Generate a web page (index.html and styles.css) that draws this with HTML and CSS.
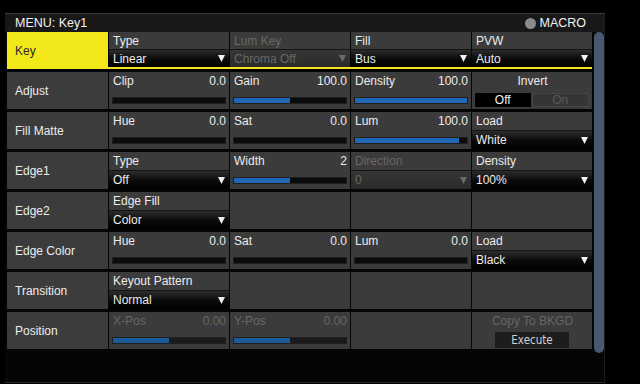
FILE: index.html
```html
<!DOCTYPE html>
<html>
<head>
<meta charset="utf-8">
<link rel="stylesheet" href="styles.css">
</head>
<body>
<div class="panel">
  <div class="header">
    <span class="title">MENU: Key1</span>
    <span class="macro"><span class="dot"></span>MACRO</span>
  </div>
  <div class="body">
    <div class="rows">
      <div class="row key">
        <div class="label sel">Key</div>
        <div class="cells">
          <div class="cell"><div class="cap"><span>Type</span></div><div class="dd"><span>Linear</span><svg class="tri" viewBox="0 0 7 7"><polygon points="0,0 7,0 3.5,7"/></svg></div></div>
          <div class="cell off"><div class="cap"><span>Lum Key</span></div><div class="dd"><span>Chroma Off</span><svg class="tri" viewBox="0 0 7 7"><polygon points="0,0 7,0 3.5,7"/></svg></div></div>
          <div class="cell"><div class="cap"><span>Fill</span></div><div class="dd"><span>Bus</span><svg class="tri" viewBox="0 0 7 7"><polygon points="0,0 7,0 3.5,7"/></svg></div></div>
          <div class="cell"><div class="cap"><span>PVW</span></div><div class="dd"><span>Auto</span><svg class="tri" viewBox="0 0 7 7"><polygon points="0,0 7,0 3.5,7"/></svg></div></div>
        </div>
      </div>

      <div class="row">
        <div class="label">Adjust</div>
        <div class="cell"><div class="cap"><span>Clip</span><span>0.0</span></div><div class="sl"><div class="fill" style="width:0%"></div></div></div>
        <div class="cell"><div class="cap"><span>Gain</span><span>100.0</span></div><div class="sl"><div class="fill" style="width:50%"></div></div></div>
        <div class="cell"><div class="cap"><span>Density</span><span>100.0</span></div><div class="sl"><div class="fill" style="width:100%"></div></div></div>
        <div class="cell"><div class="cap center"><span>Invert</span></div><div class="toggle"><span class="on">Off</span><span class="idle">On</span></div></div>
      </div>

      <div class="row">
        <div class="label">Fill Matte</div>
        <div class="cell"><div class="cap"><span>Hue</span><span>0.0</span></div><div class="sl"><div class="fill" style="width:0%"></div></div></div>
        <div class="cell"><div class="cap"><span>Sat</span><span>0.0</span></div><div class="sl"><div class="fill" style="width:0%"></div></div></div>
        <div class="cell"><div class="cap"><span>Lum</span><span>100.0</span></div><div class="sl"><div class="fill" style="width:93%"></div></div></div>
        <div class="cell"><div class="cap"><span>Load</span></div><div class="dd"><span>White</span><svg class="tri" viewBox="0 0 7 7"><polygon points="0,0 7,0 3.5,7"/></svg></div></div>
      </div>

      <div class="row">
        <div class="label">Edge1</div>
        <div class="cell"><div class="cap"><span>Type</span></div><div class="dd"><span>Off</span><svg class="tri" viewBox="0 0 7 7"><polygon points="0,0 7,0 3.5,7"/></svg></div></div>
        <div class="cell"><div class="cap"><span>Width</span><span>2</span></div><div class="sl"><div class="fill" style="width:50%"></div></div></div>
        <div class="cell off"><div class="cap"><span>Direction</span></div><div class="dd"><span>0</span><svg class="tri" viewBox="0 0 7 7"><polygon points="0,0 7,0 3.5,7"/></svg></div></div>
        <div class="cell"><div class="cap"><span>Density</span></div><div class="dd"><span>100%</span><svg class="tri" viewBox="0 0 7 7"><polygon points="0,0 7,0 3.5,7"/></svg></div></div>
      </div>

      <div class="row">
        <div class="label">Edge2</div>
        <div class="cell"><div class="cap"><span>Edge Fill</span></div><div class="dd"><span>Color</span><svg class="tri" viewBox="0 0 7 7"><polygon points="0,0 7,0 3.5,7"/></svg></div></div>
        <div class="cell"></div>
        <div class="cell"></div>
        <div class="cell"></div>
      </div>

      <div class="row">
        <div class="label">Edge Color</div>
        <div class="cell"><div class="cap"><span>Hue</span><span>0.0</span></div><div class="sl"><div class="fill" style="width:0%"></div></div></div>
        <div class="cell"><div class="cap"><span>Sat</span><span>0.0</span></div><div class="sl"><div class="fill" style="width:0%"></div></div></div>
        <div class="cell"><div class="cap"><span>Lum</span><span>0.0</span></div><div class="sl"><div class="fill" style="width:0%"></div></div></div>
        <div class="cell"><div class="cap"><span>Load</span></div><div class="dd"><span>Black</span><svg class="tri" viewBox="0 0 7 7"><polygon points="0,0 7,0 3.5,7"/></svg></div></div>
      </div>

      <div class="row">
        <div class="label">Transition</div>
        <div class="cell"><div class="cap"><span>Keyout Pattern</span></div><div class="dd"><span>Normal</span><svg class="tri" viewBox="0 0 7 7"><polygon points="0,0 7,0 3.5,7"/></svg></div></div>
        <div class="cell"></div>
        <div class="cell"></div>
        <div class="cell"></div>
      </div>

      <div class="row">
        <div class="label">Position</div>
        <div class="cell off"><div class="cap"><span>X-Pos</span><span>0.00</span></div><div class="sl"><div class="fill" style="width:50%"></div></div></div>
        <div class="cell off"><div class="cap"><span>Y-Pos</span><span>0.00</span></div><div class="sl"><div class="fill" style="width:50%"></div></div></div>
        <div class="cell"></div>
        <div class="cell off"><div class="cap center"><span>Copy To BKGD</span></div><div class="btn">Execute</div></div>
      </div>
    </div>
    <div class="scroll"></div>
  </div>
</div>
</body>
</html>
```

FILE: styles.css
```css
html, body {
  margin: 0;
  padding: 0;
  background: #000;
}
body {
  font-family: "Liberation Sans", Arial, sans-serif;
  font-size: 12px;
  color: #ececec;
  width: 640px;
  height: 384px;
  overflow: hidden;
}
.panel {
  margin: 13px 0 0 5px;
  width: 599px;
  height: 368px;
  background: #050505;
  border-top: 1px solid #3a3b46;
  border-right: 1px solid #1c1c20;
  border-bottom: 1px solid #262626;
}
.header {
  height: 18px;
  background: #181818;
  display: flex;
  align-items: center;
  justify-content: space-between;
  padding: 0 18px 0 10px;
  font-size: 12.5px;
  color: #f2f2f2;
}
.macro {
  display: flex;
  align-items: center;
  gap: 3px;
}
.dot {
  width: 11px;
  height: 11px;
  border-radius: 50%;
  background: #8a8a8a;
}
.body {
  display: flex;
  padding-left: 2px;
}
.rows {
  display: flex;
  flex-direction: column;
  gap: 3px;
  width: 585px;
}
.row {
  display: grid;
  grid-template-columns: 101px repeat(4, 120px);
  column-gap: 1px;
  height: 37px;
}
.row.key {
  grid-template-columns: 101px 484px;
  column-gap: 0;
}
.cells {
  display: grid;
  grid-template-columns: repeat(4, 120px);
  column-gap: 1px;
  padding-left: 1px;
  border-bottom: 2px solid #f2e618;
}
.cells .cap {
  height: 17px;
}
.cells .dd {
  height: 17px;
}
.label {
  background: #3c3c3c;
  display: flex;
  align-items: center;
  padding-left: 8px;
  color: #ececec;
}
.label.sel {
  background: #f3e81a;
  color: #2a2a2a;
}
.cell {
  background: #3b3b3b;
  display: flex;
  flex-direction: column;
  overflow: hidden;
}
.cap {
  height: 18px;
  display: flex;
  align-items: center;
  justify-content: space-between;
  padding: 0 3px 0 4px;
  white-space: nowrap;
}
.cap.center {
  justify-content: center;
}
.dd {
  height: 18px;
  border-top: 1px solid #151515;
  background: linear-gradient(#2c2c2c, #0a0a0a 55%, #000);
  display: flex;
  align-items: center;
  justify-content: space-between;
  padding: 0 4px 0 4px;
}
.tri {
  width: 7px;
  height: 7px;
  fill: #f0f0f0;
}
.off .cap, .off .dd {
  color: #676767;
}
.off .dd {
  background: linear-gradient(#363636, #2a2a2a);
}
.off .tri {
  fill: #6a6a6a;
}
.sl {
  height: 5px;
  margin: 7px 3px 0 3px;
  background: #0b0b0b;
  border: 1px solid #1e1e1e;
  display: flex;
}
.fill {
  height: 100%;
  background: #1f67b4;
}
.off .fill {
  background: #1b5a98;
}
.off .sl {
  background: #1a1a1a;
}
.toggle {
  display: flex;
  gap: 1px;
  margin: 3px 3px 0 3px;
  height: 14px;
}
.toggle span {
  flex: 1;
  display: flex;
  align-items: center;
  justify-content: center;
}
.toggle .on {
  background: #000;
  color: #f4f4f4;
}
.toggle .idle {
  background: #353535;
  border: 1px solid #464646;
  color: #585858;
}
.btn {
  align-self: center;
  width: 74px;
  height: 16px;
  margin-top: 2px;
  background: #1d1d1d;
  color: #d4d4d4;
  display: flex;
  align-items: center;
  justify-content: center;
  font-family: "DejaVu Sans Condensed", "Liberation Sans Narrow", sans-serif;
  font-size: 11.5px;
}
.scroll {
  width: 10px;
  height: 321px;
  margin-left: 2px;
  background: #48596f;
  border-radius: 5px;
}
```
